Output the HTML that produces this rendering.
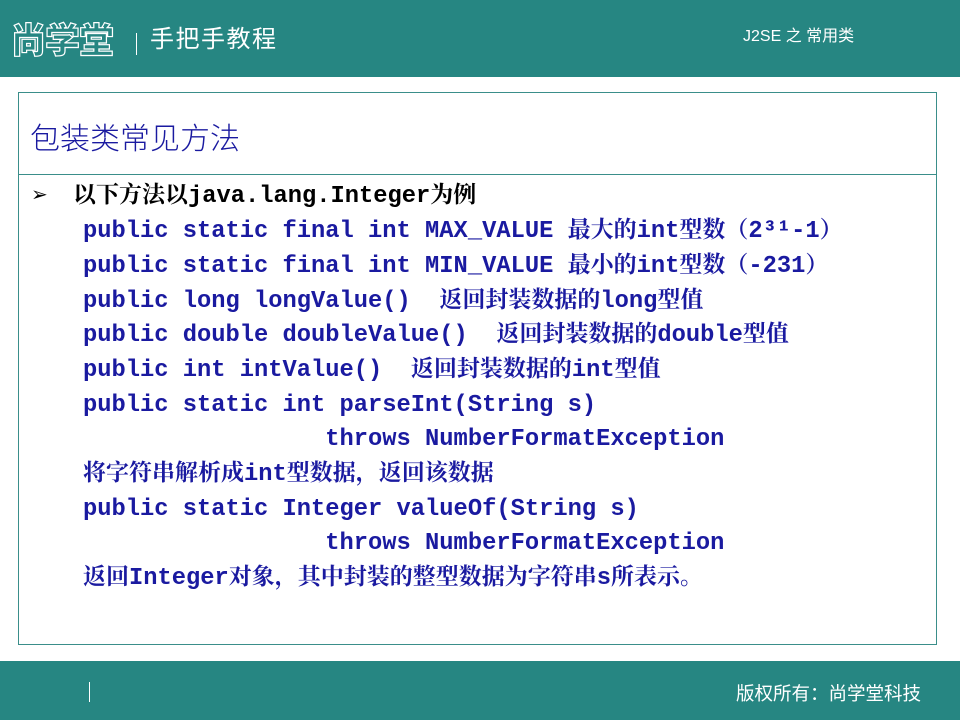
<!DOCTYPE html>
<html><head><meta charset="utf-8"><style>
*{margin:0;padding:0}
body{width:960px;height:720px;position:relative;background:#fff;font-family:"Liberation Sans","Noto Sans CJK SC",sans-serif;overflow:hidden}
.hd{position:absolute;left:0;top:0;width:960px;height:77px;background:#268682}
.ft{position:absolute;left:0;top:661px;width:960px;height:59px;background:#268682}
.logo{position:absolute;left:11px;top:17px;font-size:35px;line-height:44px;color:transparent;-webkit-text-stroke:1.2px #fff;font-family:"Noto Sans CJK SC",sans-serif;font-weight:900;letter-spacing:-1px}
.vl{position:absolute;width:1px;background:#fff}
.sub{position:absolute;left:150px;top:24px;font-size:24px;line-height:32px;color:#fff;letter-spacing:1.5px}
.j2{position:absolute;left:743px;top:22px;font-size:16px;color:#fff}
.box{position:absolute;left:18px;top:92px;width:917px;height:551px;border:1px solid #3a8e8a}
.div{position:absolute;left:18px;top:174px;width:918px;height:1px;background:#3a8e8a}
.title{position:absolute;left:30px;top:116px;font-size:30px;line-height:40px;color:#1a1aa0;font-family:"Noto Sans CJK SC",sans-serif;font-weight:300}
.l{position:absolute;left:83px;font-family:"Liberation Mono","Noto Serif CJK SC",monospace;font-weight:bold;font-size:23.75px;line-height:30px;height:30px;color:#1a1aa0;white-space:pre}
.l .c{font-family:"Noto Serif CJK SC",serif;font-size:23px;line-height:0}
.first{left:73px;color:#000}
.bul{position:absolute;left:31px;top:182px;font-size:20px;color:#000}
.cr{position:absolute;left:736px;top:680px;font-size:18.5px;color:#fff}
</style></head><body>
<div class="hd"></div>
<div class="logo">尚学堂</div>
<div class="vl" style="left:136px;top:33px;height:22px"></div>
<div class="sub">手把手教程</div>
<div class="j2">J2SE 之 常用类</div>
<div class="box"></div>
<div class="div"></div>
<div class="title">包装类常见方法</div>
<div class="bul">➢</div>
<div class="l first" style="top:182px"><span class="c">以下方法以</span>java.lang.Integer<span class="c">为例</span></div>
<div class="l" style="top:217px">public static final int MAX_VALUE <span class="c">最大的</span>int<span class="c">型数（</span>2³¹-1<span class="c">）</span></div>
<div class="l" style="top:252px">public static final int MIN_VALUE <span class="c">最小的</span>int<span class="c">型数（</span>-231<span class="c">）</span></div>
<div class="l" style="top:287px">public long longValue()  <span class="c">返回封装数据的</span>long<span class="c">型值</span></div>
<div class="l" style="top:321px">public double doubleValue()  <span class="c">返回封装数据的</span>double<span class="c">型值</span></div>
<div class="l" style="top:356px">public int intValue()  <span class="c">返回封装数据的</span>int<span class="c">型值</span></div>
<div class="l" style="top:391px">public static int parseInt(String s)</div>
<div class="l" style="top:425px">                 throws NumberFormatException</div>
<div class="l" style="top:460px"><span class="c">将字符串解析成</span>int<span class="c">型数据，返回该数据</span></div>
<div class="l" style="top:495px">public static Integer valueOf(String s)</div>
<div class="l" style="top:529px">                 throws NumberFormatException</div>
<div class="l" style="top:564px"><span class="c">返回</span>Integer<span class="c">对象，其中封装的整型数据为字符串</span>s<span class="c">所表示。</span></div>
<div class="ft"></div>
<div class="vl" style="left:89px;top:682px;height:20px"></div>
<div class="cr">版权所有：尚学堂科技</div>
</body></html>
